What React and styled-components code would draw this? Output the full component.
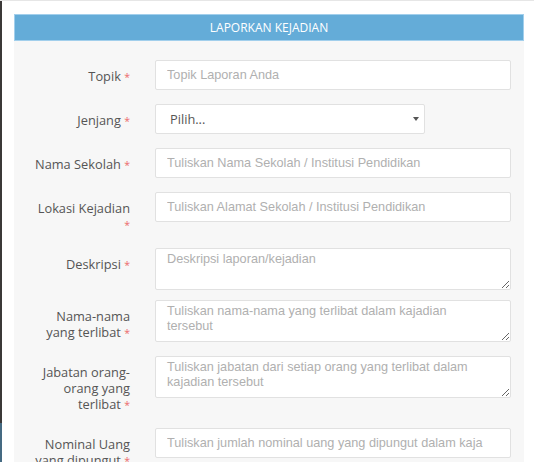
import React from 'react';
import styled, {createGlobalStyle} from 'styled-components';

const GlobalStyle = createGlobalStyle`
  html, body {
    margin: 0;
    padding: 0;
    height: 100%;
    overflow: hidden;
    background: #fff;
    font-family: "Open Sans", "Liberation Sans", sans-serif;
  }
  * { box-sizing: border-box; }
`;

const Page = styled.div`
  min-height: 100vh;
  padding: 13px 10px 0 14px;
  border-top: 1px solid #e6e6e6;
  background: linear-gradient(#3b3938 0 90%, #456a82 90%) left top / 2px 100% no-repeat, #fff;
`;

const Panel = styled.section`
  background: #f7f7f7;
`;

const PanelHeading = styled.div`
  height: 27px;
  border: 1px solid #a2cfec;
  background: #64acd8;
  color: #fff;
  font-size: 12px;
  line-height: 25px;
  text-align: center;
  text-transform: uppercase;
`;

const PanelBody = styled.form`
  padding: 19px 13px 0 0;
`;

const Row = styled.div`
  display: grid;
  grid-template-columns: 116px 1fr;
  column-gap: 25px;
  align-items: start;
  margin-bottom: ${p => p.$gap || 14}px;
`;

const Label = styled.label`
  padding: 8px 0 2px 16px;
  text-align: right;
  font-size: 12.8px;
  line-height: 16px;
  color: #555;
`;

const Req = styled.span`
  color: #ec6b6b;
  font-size: 10.5px;
  line-height: 1;
`;

const fieldBase = `
  display: block;
  width: 100%;
  border: 1px solid #e1e1e1;
  border-radius: 2px;
  background: #fff;
  font-family: "Liberation Sans", Arial, sans-serif;
  font-size: 12.7px;
  color: #555;
  outline: none;
  &::placeholder { color: #b0b0b0; opacity: 1; }
`;

const Input = styled.input`
  ${fieldBase}
  height: 30px;
  padding: 0 11px;
`;

const TextArea = styled.textarea`
  ${fieldBase}
  height: 42px;
  padding: 3px 24px 3px 11px;
  line-height: 15.4px;
  resize: vertical;
`;

const SelectWrap = styled.div`
  position: relative;
  width: 270px;
`;

const Select = styled.select`
  ${fieldBase}
  appearance: none;
  height: 30px;
  padding: 0 14px;
  font-family: "Open Sans", sans-serif;
  font-size: 12.8px;
  color: #555;
`;

const Caret = styled.span`
  position: absolute;
  right: 6px;
  top: 13px;
  width: 0;
  height: 0;
  border-left: 3px solid transparent;
  border-right: 3px solid transparent;
  border-top: 4px solid #555;
  pointer-events: none;
`;

const fields = [
  {label: 'Topik', kind: 'input', ph: 'Topik Laporan Anda'},
  {label: 'Jenjang', kind: 'select'},
  {label: 'Nama Sekolah', kind: 'input', ph: 'Tuliskan Nama Sekolah / Institusi Pendidikan'},
  {label: 'Lokasi Kejadian', kind: 'input', ph: 'Tuliskan Alamat Sekolah / Institusi Pendidikan'},
  {label: 'Deskripsi', kind: 'text', ph: 'Deskripsi laporan/kejadian', gap: 10},
  {label: 'Nama-nama yang terlibat', kind: 'text', ph: 'Tuliskan nama-nama yang terlibat dalam kajadian tersebut'},
  {label: 'Jabatan orang-orang yang terlibat', kind: 'text', ph: 'Tuliskan jabatan dari setiap orang yang terlibat dalam kajadian tersebut'},
  {label: 'Nominal Uang yang dipungut', kind: 'input', ph: 'Tuliskan jumlah nominal uang yang dipungut dalam kaja'},
];

function Field({f}) {
  if (f.kind === 'select') {
    return (
      <SelectWrap>
        <Select defaultValue="">
          <option value="">Pilih...</option>
          <option>SD</option>
          <option>SMP</option>
          <option>SMA</option>
        </Select>
        <Caret />
      </SelectWrap>
    );
  }
  if (f.kind === 'text') return <TextArea placeholder={f.ph} />;
  return <Input placeholder={f.ph} />;
}

export default function App() {
  return (
    <>
      <GlobalStyle />
      <Page>
        <Panel>
          <PanelHeading>Laporkan Kejadian</PanelHeading>
          <PanelBody>
            {fields.map(f => (
              <Row key={f.label} $gap={f.gap}>
                <Label>{f.label} <Req>*</Req></Label>
                <Field f={f} />
              </Row>
            ))}
          </PanelBody>
        </Panel>
      </Page>
    </>
  );
}
